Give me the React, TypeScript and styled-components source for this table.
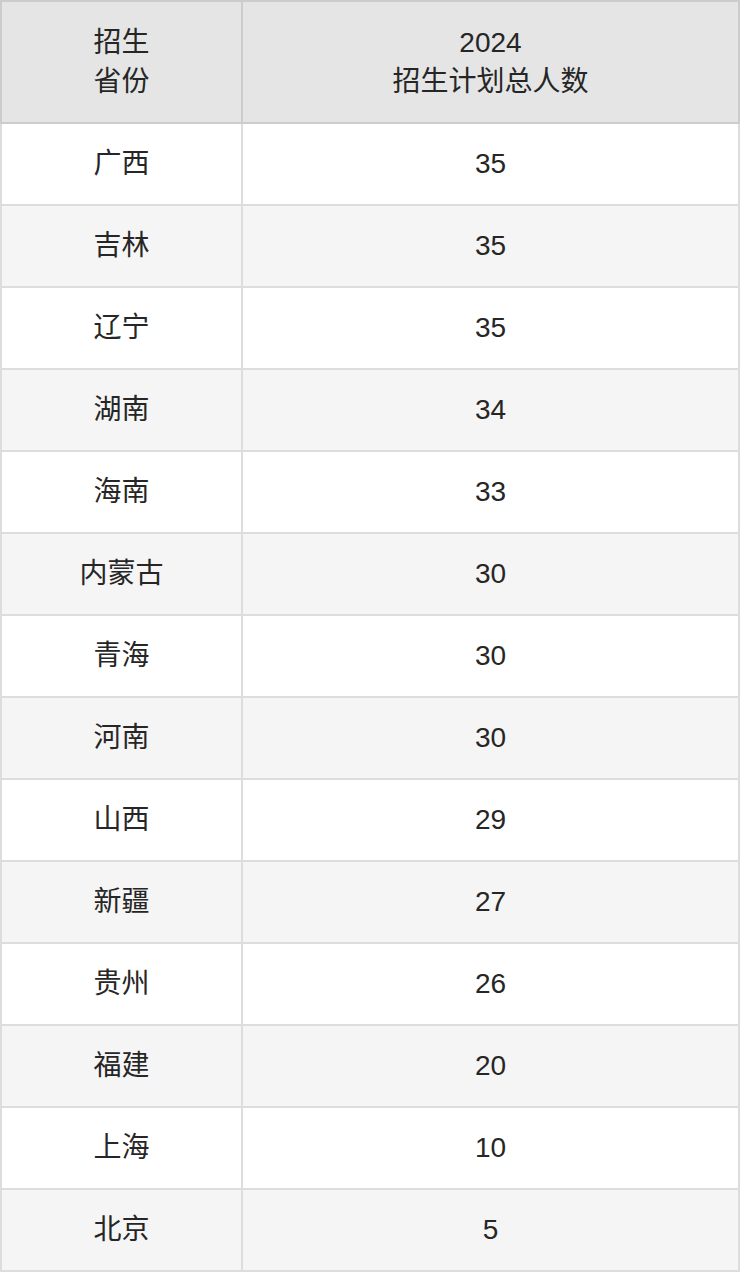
import styled, { createGlobalStyle } from 'styled-components'

const GlobalStyle = createGlobalStyle`
  html, body {
    margin: 0;
    padding: 0;
    background: #ffffff;
  }
  body {
    font-family: "Liberation Sans", "Noto Sans CJK SC", sans-serif;
    color: #262626;
  }
`

interface Row {
  province: string
  total: string
}

const rows: Row[] = [
  { province: '广西', total: '35' },
  { province: '吉林', total: '35' },
  { province: '辽宁', total: '35' },
  { province: '湖南', total: '34' },
  { province: '海南', total: '33' },
  { province: '内蒙古', total: '30' },
  { province: '青海', total: '30' },
  { province: '河南', total: '30' },
  { province: '山西', total: '29' },
  { province: '新疆', total: '27' },
  { province: '贵州', total: '26' },
  { province: '福建', total: '20' },
  { province: '上海', total: '10' },
  { province: '北京', total: '5' },
]

const Table = styled.div`
  width: 740px;
  display: flex;
  flex-direction: column;
  font-size: 28px;
  line-height: 39px;
`

const HeadRow = styled.div`
  display: grid;
  grid-template-columns: 239px 495px;
  gap: 2px;
  padding: 2px;
  background: #cccccc;
`

const HeadCell = styled.div`
  height: 120px;
  background: #e5e5e5;
  display: flex;
  align-items: center;
  justify-content: center;
  text-align: center;
  font-weight: 400;
`

const BodyRow = styled.div<{ $striped: boolean }>`
  display: grid;
  grid-template-columns: 239px 495px;
  gap: 2px;
  padding: 0 2px 2px;
  background: #dddddd;

  & > div {
    background: ${(p) => (p.$striped ? '#f5f5f5' : '#ffffff')};
  }
`

const Cell = styled.div`
  height: 80px;
  padding-bottom: 2px;
  box-sizing: border-box;
  display: flex;
  align-items: center;
  justify-content: center;
`

export default function App() {
  return (
    <>
      <GlobalStyle />
      <Table>
        <HeadRow>
          <HeadCell>
            招生
            <br />
            省份
          </HeadCell>
          <HeadCell>
            2024
            <br />
            招生计划总人数
          </HeadCell>
        </HeadRow>
        {rows.map((r, i) => (
          <BodyRow key={r.province} $striped={i % 2 === 1}>
            <Cell>{r.province}</Cell>
            <Cell>{r.total}</Cell>
          </BodyRow>
        ))}
      </Table>
    </>
  )
}
